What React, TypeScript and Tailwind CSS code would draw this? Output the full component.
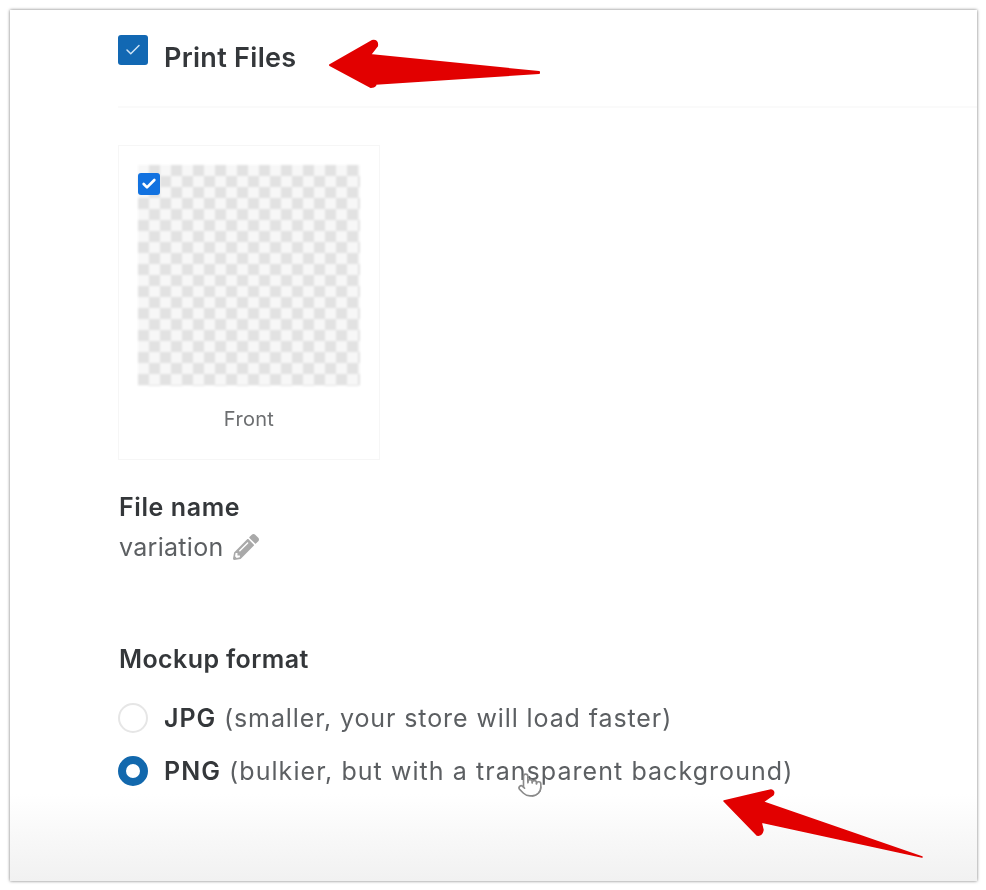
import { Check, Pointer } from "lucide-react";
import { FaPencilAlt } from "react-icons/fa";

function Radio({ on }: { on?: boolean }) {
  return on ? (
    <span className="h-[30px] w-[30px] shrink-0 rounded-full border-[8px] border-[#1268ad] bg-white" />
  ) : (
    <span className="h-[30px] w-[30px] shrink-0 rounded-full border-2 border-[#e6e6e6] bg-white" />
  );
}

export default function App() {
  return (
    <div className="h-[890px] w-[986px] bg-white p-[10px] font-['Inter',sans-serif] text-[#3d4043]">
      <div className="relative h-[871px] w-[967px] overflow-hidden bg-gradient-to-b from-white from-[90%] to-[#f1f1f1] shadow-[0_0_3px_rgba(0,0,0,0.55)]">
        <div className="pl-[108px] pt-[25px] blur-[0.7px]">
          {/* Section header */}
          <div className="flex items-start gap-[16px] border-b-2 border-[#fafafa] pb-[31px]">
            <span className="flex h-[30px] w-[30px] items-center justify-center rounded-[3px] bg-[#1268b3]">
              <Check className="h-[18px] w-[18px] text-[#cfe3f5]" strokeWidth={2} />
            </span>
            <span className="mt-[5px] mb-[-1px] text-[27px] font-semibold leading-[36px] tracking-[0.3px] text-[#34373a]">
              Print Files
            </span>
          </div>

          {/* Print file card */}
          <div className="mt-[37px] flex h-[315px] w-[262px] flex-col border border-[#f6f6f6] px-[19px] pt-[19px]">
            <div className="relative h-[221px] w-[222px]">
              <div className="h-full w-full bg-[conic-gradient(#e2e2e2_25%,#f7f7f7_0_50%,#e2e2e2_0_75%,#f7f7f7_0)] bg-[length:22px_22px] blur-[1px]" />
              <span className="absolute top-[8px] left-0 flex h-[22px] w-[22px] items-center justify-center rounded-[3px] bg-[#1272e0]">
                <Check className="h-[16px] w-[16px] text-white" strokeWidth={4} />
              </span>
            </div>
            <div className="mt-[20px] text-center text-[20px] leading-[26px] tracking-[0.3px] text-[#6c6e70]">Front</div>
          </div>

          {/* File name */}
          <div className="mt-[31px] pl-px text-[25px] font-semibold leading-[32px] tracking-[0.6px] text-[#34373a]">File name</div>
          <div className="mt-[8px] flex items-center gap-[9px] pl-px text-[25px] leading-[32px] tracking-[0.3px] text-[#5c5f62]">
            variation
            <FaPencilAlt className="h-[26px] w-[26px] text-[#a9a9a9]" />
          </div>

          {/* Mockup format */}
          <div className="mt-[80px] pl-px text-[25px] font-semibold leading-[32px] tracking-[0.4px] text-[#34373a]">Mockup format</div>
          <div className="mt-[27px] flex items-center gap-[16px] text-[25px] leading-[32px] tracking-[0.9px] text-[#5c5f62]">
            <Radio />
            <span>
              <b className="font-semibold text-[#34373a]">JPG</b> (smaller, your store will load faster)
            </span>
          </div>
          <div className="mt-[21px] flex items-center gap-[16px] text-[25px] leading-[32px] tracking-[1.06px] text-[#5c5f62]">
            <Radio on />
            <span>
              <b className="font-semibold text-[#34373a]">PNG</b> (bulkier, but with a transparent background)
            </span>
          </div>
        </div>

        {/* Cursor */}
        <Pointer className="absolute left-[507px] top-[762px] h-[26px] w-[26px] fill-white/60 text-[#8a8a8a]" strokeWidth={1.5} />

        {/* Annotation arrows */}
        <svg className="absolute inset-0 h-full w-full" viewBox="0 0 967 871" fill="none">
          <path
            d="M320 55 L362 31 Q368 30 367 36 L360 45 L529 62 L529 63 L362 74 L365 72 Q367 77 361 77 Z"
            fill="#e20000"
            stroke="#e20000"
            strokeWidth="2"
            strokeLinejoin="round"
          />
          <path
            d="M714 791 L761 780 Q765 781 763 785 L753 792 L912 847 L751 812 L753 820 Q752 826 747 825 Z"
            fill="#e20000"
            stroke="#e20000"
            strokeWidth="1.5"
            strokeLinejoin="round"
          />
        </svg>
      </div>
    </div>
  );
}
